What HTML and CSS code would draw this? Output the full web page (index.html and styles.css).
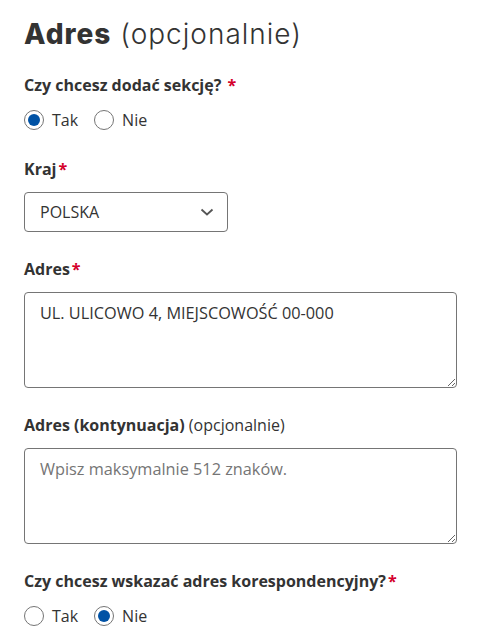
FILE: index.html
```html
<!DOCTYPE html>
<html lang="pl">
<head>
<meta charset="utf-8">
<title>Adres</title>
<link rel="stylesheet" href="styles.css">
</head>
<body>
<main class="form">
  <h1 class="title"><strong>Adres</strong> (opcjonalnie)</h1>

  <div class="group">
    <div class="label">Czy chcesz dodać sekcję? <span class="req">*</span></div>
    <div class="radios">
      <label class="radio"><span class="dot checked"></span><span>Tak</span></label>
      <label class="radio"><span class="dot"></span><span>Nie</span></label>
    </div>
  </div>

  <div class="group">
    <div class="label">Kraj<span class="req">*</span></div>
    <div class="select">
      <span>POLSKA</span>
      <svg class="chev" width="14" height="8" viewBox="0 0 14 8"><path d="M1.5 1.5 L7 6.5 L12.5 1.5" fill="none" stroke="#555" stroke-width="1.8"/></svg>
    </div>
  </div>

  <div class="group">
    <div class="label">Adres<span class="req">*</span></div>
    <textarea class="area">UL. ULICOWO 4, MIEJSCOWOŚĆ 00-000</textarea>
  </div>

  <div class="group">
    <div class="label">Adres (kontynuacja) <span class="opt">(opcjonalnie)</span></div>
    <textarea class="area" placeholder="Wpisz maksymalnie 512 znaków."></textarea>
  </div>

  <div class="group">
    <div class="label">Czy chcesz wskazać adres korespondencyjny?<span class="req">*</span></div>
    <div class="radios">
      <label class="radio"><span class="dot"></span><span>Tak</span></label>
      <label class="radio"><span class="dot checked"></span><span>Nie</span></label>
    </div>
  </div>
</main>
</body>
</html>
```

FILE: styles.css
```css
html, body {
  margin: 0;
  padding: 0;
  background: #fff;
}
body {
  font-family: "Open Sans", "Liberation Sans", sans-serif;
  color: #333;
}
.form {
  padding: 16px 24px 0 24px;
  display: flex;
  flex-direction: column;
}
.title {
  margin: 0 0 21px 0;
  font-family: "Inter", "Liberation Sans", sans-serif;
  font-size: 28px;
  line-height: 36px;
  font-weight: 300;
  color: #333;
  letter-spacing: 1px;
}
.title strong {
  font-weight: 800;
}
.group {
  display: flex;
  flex-direction: column;
  margin-bottom: 25px;
}
.label {
  font-size: 16px;
  line-height: 24px;
  font-weight: 700;
  margin-bottom: 11px;
}
.req {
  color: #d4002b;
  margin-left: 2px;
}
.opt {
  font-weight: 400;
}
.radios {
  display: flex;
  gap: 16px;
  height: 24px;
  align-items: center;
}
.radio {
  display: flex;
  align-items: center;
  gap: 8px;
  font-size: 16px;
  line-height: 24px;
}
.dot {
  box-sizing: border-box;
  width: 20px;
  height: 20px;
  border: 1.5px solid #757575;
  border-radius: 50%;
  display: flex;
  align-items: center;
  justify-content: center;
}
.dot.checked::after {
  content: "";
  width: 12px;
  height: 12px;
  border-radius: 50%;
  background: #0052a5;
}
.select {
  box-sizing: border-box;
  width: 204px;
  height: 40px;
  border: 1px solid #757575;
  border-radius: 4px;
  display: flex;
  align-items: center;
  justify-content: space-between;
  padding: 0 13px 0 15px;
  font-size: 16px;
}
.area {
  box-sizing: border-box;
  width: 433px;
  height: 96px;
  border: 1px solid #757575;
  border-radius: 4px;
  padding: 8px 15px;
  font-family: "Open Sans", "Liberation Sans", sans-serif;
  font-size: 16.3px;
  line-height: 24px;
  color: #333;
  resize: vertical;
  margin: 0;
}
.area::placeholder {
  color: #757575;
}
```
